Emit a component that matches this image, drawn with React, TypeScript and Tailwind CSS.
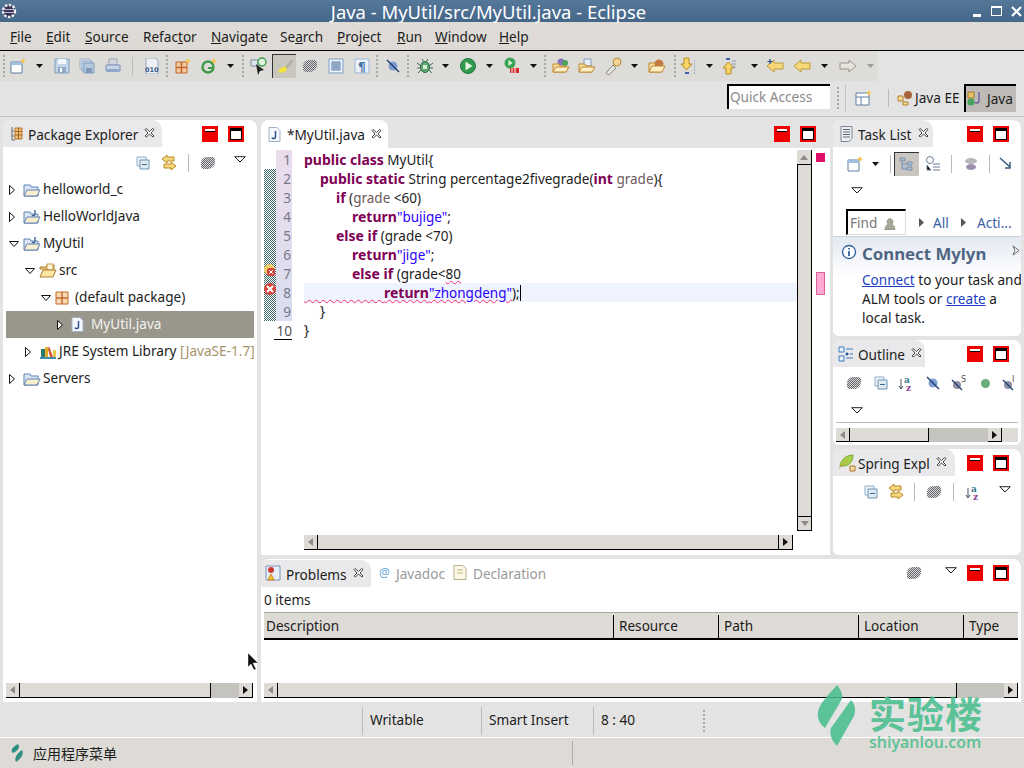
import React from 'react';

type Kids = { children?: React.ReactNode };

function Ico({ children, w = 16, h = 16 }: Kids & { w?: number; h?: number }) {
  return (
    <svg width={w} height={h} viewBox={`0 0 ${w} ${h}`} className="block shrink-0">
      {children}
    </svg>
  );
}

/* toolbar icons */
const NewFile = () => (
  <Ico w={18} h={16}>
    <path d="M2 4h11v11H2z" fill="#fff" stroke="#5f7f9f" />
    <path d="M2 4h11v3H2z" fill="#9fbfdf" />
    <path d="M14 0l1 2 2 1-2 1-1 2-1-2-2-1 2-1z" fill="#f5c64a" />
  </Ico>
);
const Floppy = () => (
  <Ico>
    <path d="M1 1h14v14H1z" fill="#c5d5e8" stroke="#7f9fc0" />
    <path d="M4 1h8v5H4z" fill="#f4f7fb" />
    <path d="M4 9h8v6H4z" fill="#8fa9c7" />
    <path d="M6 10h2v4H6z" fill="#fff" />
  </Ico>
);
const SaveAll = () => (
  <Ico>
    <path d="M1 1h10v10H1z" fill="#dde5ef" stroke="#a3b6cb" />
    <path d="M3 3h10v10H3z" fill="#c5d5e8" stroke="#8fa9c7" />
    <path d="M5 5h10v10H5z" fill="#b6cadf" stroke="#7f9fc0" />
    <path d="M7 10h6v5H7z" fill="#7f99b8" />
  </Ico>
);
const Printer = () => (
  <Ico>
    <path d="M4 1h8v6H4z" fill="#f6f7fa" stroke="#8b95a8" />
    <path d="M1 7h14v6H1z" fill="#c7d3e6" stroke="#7890b5" />
    <path d="M2 11h12v3H2z" fill="#8ea8cc" />
    <path d="M5 3h6M5 5h6" stroke="#aab2c2" />
  </Ico>
);
const Binary = () => (
  <Ico w={14} h={16}>
    <path d="M1 0h9l3 3v13H1z" fill="#eef1f6" stroke="#9caabd" />
    <text x="0" y="14" fontSize="6.5" fill="#345a8a" fontFamily="'DejaVu Sans',sans-serif" fontWeight="700">010</text>
  </Ico>
);
const PkgStar = () => (
  <Ico>
    <path d="M1 4h11v11H1z" fill="#f2c9a0" stroke="#c2642a" />
    <path d="M6.5 4v11M1 9.5h11" stroke="#c2642a" strokeWidth="1.5" />
    <path d="M13 0l1 2 2 1-2 1-1 2-1-2-2-1 2-1z" fill="#f5c64a" />
  </Ico>
);
const GCircle = () => (
  <Ico>
    <circle cx="7" cy="9" r="5.5" fill="none" stroke="#3f9a4a" strokeWidth="2.4" />
    <path d="M7 9h5v2H7z" fill="#3f9a4a" />
    <path d="M13 0l1 2 2 1-2 1-1 2-1-2-2-1 2-1z" fill="#f5c64a" />
  </Ico>
);
const RunG = () => (
  <Ico w={18} h={18}>
    <path d="M1 3h7v6H1z" fill="#dfe5ee" stroke="#7c8ba3" />
    <circle cx="12" cy="5" r="4" fill="#dff0df" stroke="#3f9a4a" strokeWidth="1.4" />
    <path d="M6 7l8 6-4 1-2 4z" fill="#222" />
  </Ico>
);
const Marker = () => (
  <Ico w={18} h={18}>
    <path d="M16 1L9 9l2 2 6-8z" fill="#b3ad9e" />
    <path d="M2 14c2-5 6-6 8-5l1 2c-1 3-5 5-9 3z" fill="#f2e23c" />
  </Ico>
);
const Dither = () => (
  <div className="w-[14px] h-[12px] rounded-tl-[6px] rounded-br-[7px] rounded-tr-[3px] rounded-bl-[3px] bg-[repeating-conic-gradient(#66666a_0_25%,#d8d8da_0_50%)] bg-[length:2px_2px]" />
);
const Blocks = () => (
  <Ico>
    <path d="M1 1h14v14H1z" fill="#eaf0f8" stroke="#7f9fc8" />
    <path d="M4 4h8v8H4z" fill="#c9d8ec" stroke="#5f7fa8" />
    <path d="M5 6h6M5 8h6M5 10h6" stroke="#50709a" />
  </Ico>
);
const Pilcrow = () => (
  <Ico>
    <path d="M1 1h14v14H1z" fill="#eaf0f8" stroke="#9fb7d6" />
    <text x="4" y="13" fontSize="12" fontWeight="700" fill="#3f6fa8" fontFamily="'DejaVu Sans',sans-serif">¶</text>
  </Ico>
);
const Slash = () => (
  <Ico>
    <circle cx="8" cy="8" r="4.5" fill="#7f9fd0" />
    <path d="M2 2l12 12" stroke="#1d3f70" strokeWidth="1.4" />
  </Ico>
);
const PinS = ({ c = '#8f8fa3', t }: { c?: string; t: string }) => (
  <Ico>
    <circle cx="6" cy="10" r="4" fill={c} />
    <path d="M1 5l10 10" stroke="#1d3f70" strokeWidth="1.2" />
    <text x="10" y="7" fontSize="8" fill="#555" fontFamily="'DejaVu Sans',sans-serif">{t}</text>
  </Ico>
);
const Bug = () => (
  <Ico w={18} h={18}>
    <ellipse cx="9" cy="10" rx="4.5" ry="5.5" fill="#5fa86f" stroke="#2c6a45" />
    <path d="M1 6l4 3M17 6l-4 3M1 11h4M17 11h-4M2 16l3-3M16 16l-3-3M6 2l2 3M12 2l-2 3" stroke="#3c6a55" />
    <path d="M7 8h4v4H7z" fill="#d8ecd8" />
  </Ico>
);
const Play = () => (
  <Ico w={18} h={18}>
    <circle cx="9" cy="9" r="7.5" fill="#2f9a4c" stroke="#1f7a3a" />
    <path d="M6.5 4.5l7 4.5-7 4.5z" fill="#e6f5e0" />
  </Ico>
);
const Cover = () => (
  <Ico w={18} h={18}>
    <circle cx="8" cy="6" r="5.5" fill="#3aa455" />
    <path d="M6.5 3l4 3-4 3z" fill="#e6f5e0" />
    <path d="M8 11h9v5H8z" fill="#d92c2c" />
    <path d="M10 11v5M13 11v5" stroke="#fff" />
  </Ico>
);
const OpenType = () => (
  <Ico w={18} h={16}>
    <circle cx="9" cy="4" r="3.5" fill="#8a74b8" />
    <circle cx="13" cy="5" r="3" fill="#4aa35a" />
    <path d="M1 6h6l1 2h6v6H1z" fill="#f6dd9c" stroke="#c08a32" />
    <path d="M1 14l3-5h13l-3 5z" fill="#fbeec6" stroke="#c08a32" />
  </Ico>
);
const OpenRes = () => (
  <Ico w={18} h={16}>
    <path d="M6 1h7v7H6z" fill="#e8eef6" stroke="#7f9fc0" />
    <path d="M1 6h6l1 2h6v6H1z" fill="#f6dd9c" stroke="#c08a32" />
    <path d="M1 14l3-5h13l-3 5z" fill="#fbeec6" stroke="#c08a32" />
  </Ico>
);
const Torch = () => (
  <Ico w={18} h={18}>
    <path d="M2 16l7-8 3 3-7 7z" fill="#e5e3dd" stroke="#8d8a80" />
    <circle cx="13" cy="5" r="4" fill="#f1d392" stroke="#b88a3a" />
  </Ico>
);
const FolderPie = () => (
  <Ico w={18} h={16}>
    <path d="M1 5h6l1 1h6v8H1z" fill="#f6dd9c" stroke="#c08a32" />
    <circle cx="11" cy="6" r="4.5" fill="#c27a45" />
    <path d="M1 14l3-6h13l-3 6z" fill="#fbeec6" stroke="#c08a32" />
  </Ico>
);
const DownAnno = () => (
  <Ico w={18} h={18}>
    <path d="M6 1h5v6h3l-5.500 6L3 7h3z" fill="#f5d46a" stroke="#b98a22" />
    <path d="M7 15h4v2H7z" fill="#3f5fb0" />
    <path d="M16.500 3v14" stroke="#9fb0d0" strokeDasharray="2 1" />
  </Ico>
);
const UpAnno = () => (
  <Ico w={18} h={18}>
    <path d="M6 17h5v-6h3L8.500 5 3 11h3z" fill="#f5d46a" stroke="#b98a22" />
    <path d="M6 1h4v2H6z" fill="#3f5fb0" />
    <path d="M12 4h4M12 7h4M12 10h4" stroke="#8d98b0" />
  </Ico>
);
const ArrowL = ({ star = false }: { star?: boolean }) => (
  <Ico w={18} h={14}>
    <path d="M1 7l7-6v3h9v6H8v3z" fill="#f7d878" stroke="#bf9a3a" />
    {star && <path d="M4 0v5M1.500 2.500h5" stroke="#1f4f8f" strokeWidth="1.2" />}
  </Ico>
);
const ArrowR = () => (
  <Ico w={18} h={14}>
    <path d="M17 7l-7-6v3H1v6h9v3z" fill="#e5e3dc" stroke="#99968a" />
  </Ico>
);
const Drop = ({ c = '#111' }: { c?: string }) => (
  <svg width="7" height="4" viewBox="0 0 7 4" className="block shrink-0">
    <path d="M0 0h7L3.500 4z" fill={c} />
  </svg>
);
const OutlineDrop = () => (
  <svg width="12" height="7" viewBox="0 0 12 7" className="block">
    <path d="M.7.7h10.600L6 6z" fill="#fff" stroke="#222" />
  </svg>
);
const Handle = () => <div className="w-0 h-[22px] border-l-2 border-dotted border-[#a9a7a2]" />;
const Sep = () => <div className="w-px h-[18px] bg-[#bdbbb6] shrink-0" />;

function Slot({ className, children }: Kids & { className: string }) {
  return <div className={`flex items-center justify-center shrink-0 ${className}`}>{children}</div>;
}

/* view icons */
const Collapse = () => (
  <Ico w={14} h={14}>
    <path d="M1 1h9v9H1z" fill="#eef3f8" stroke="#8fb0c8" />
    <path d="M4 4h9v9H4z" fill="#dfe9f2" stroke="#6d94b0" />
    <path d="M6 8.500h5" stroke="#3a6a90" />
  </Ico>
);
const LinkArrows = () => (
  <Ico>
    <path d="M1 4l5-4v2h7v4H6v2z" fill="#f6d780" stroke="#b98a22" />
    <path d="M15 11l-5-4v2H3v4h7v2z" fill="#f6d780" stroke="#b98a22" />
  </Ico>
);
const SortAz = () => (
  <Ico w={17} h={17}>
    <path d="M3 4v10M1 11l2 3 2-3" fill="none" stroke="#456" />
    <text x="6" y="8" fontSize="9" fontWeight="700" fill="#2f7a8a" fontFamily="'DejaVu Serif',serif">a</text>
    <text x="8" y="16" fontSize="9" fontWeight="700" fill="#8a3f9a" fontFamily="'DejaVu Serif',serif">z</text>
  </Ico>
);
const Tri = ({ open = false }: { open?: boolean }) =>
  open ? (
    <svg width="10" height="6" viewBox="0 0 10 6" className="block">
      <path d="M.5.5h9L5 5.500z" fill="#fff" stroke="#111" />
    </svg>
  ) : (
    <svg width="6" height="10" viewBox="0 0 6 10" className="block">
      <path d="M.5.500v9L5.500 5z" fill="#fff" stroke="#111" />
    </svg>
  );
const SolidTri = () => (
  <svg width="5" height="9" viewBox="0 0 5 9" className="block">
    <path d="M0 0v9l5-4.500z" fill="#555" />
  </svg>
);
const ProjFolder = ({ j = false }: { j?: boolean }) => (
  <Ico w={18} h={16}>
    <path d="M1 3h6l1 2h7v9H1z" fill="#dce6f5" stroke="#5f80b5" />
    <path d="M1 14l3-6h13l-3 6z" fill="#f9efce" stroke="#5f80b5" />
    {j && <path d="M12 1v4c0 2-2 2-3 1" fill="none" stroke="#3c5c98" strokeWidth="1.3" />}
  </Ico>
);
const SrcFolder = () => (
  <Ico w={18} h={16}>
    <path d="M1 4h6l1-2h7v4H1z" fill="#f6dd9c" stroke="#b07c2a" />
    <path d="M8 1h6v6H8z" fill="#fff6df" stroke="#c7963c" />
    <path d="M1 14l3-7h13l-3 7z" fill="#fbe6a6" stroke="#b07c2a" />
  </Ico>
);
const PkgIcon = () => (
  <Ico w={14} h={14}>
    <path d="M1 1h12v12H1z" fill="#f7d8b4" stroke="#c26a2c" />
    <path d="M7 1v12M1 7h12" stroke="#c26a2c" strokeWidth="1.4" />
  </Ico>
);
const JavaFile = () => (
  <Ico w={13} h={15}>
    <path d="M1 .5h8l3 3v11H1z" fill="#f5f8fc" stroke="#9fb2c8" />
    <path d="M7.500 4v6c0 2-3 2-3.500 .5" fill="none" stroke="#2c4f92" strokeWidth="1.5" />
  </Ico>
);
const Books = () => (
  <Ico w={18} h={16}>
    <path d="M1 13h16v2H1z" fill="#3f8fb0" />
    <path d="M2 5h4v8H2z" fill="#2e7a6a" />
    <path d="M6 3h3v10H6z" fill="#e8a92c" />
    <path d="M10 2l4 11h-3L9 5z" fill="#d6532a" />
    <path d="M14 6h3v7h-3z" fill="#e6c84a" />
  </Ico>
);
const PkgExplorer = () => (
  <Ico w={12} h={14}>
    <path d="M1 0v13h3M1 4h2M1 9h2" fill="none" stroke="#666" />
    <path d="M4 1h7v11H4z" fill="#e9bf79" stroke="#b5762a" />
    <path d="M4 4.500h7M4 8h7M7.500 1v11" stroke="#a8641e" />
  </Ico>
);
const TaskIcon = () => (
  <Ico w={13} h={16}>
    <path d="M1 .5h11v12l-3 3H1z" fill="#eef0f3" stroke="#7d8693" />
    <path d="M3 3.500h7M3 6h7M3 8.500h7M3 11h7" stroke="#5f6a78" />
  </Ico>
);
const OutlineIcon = () => (
  <Ico>
    <path d="M1 1h5v5H1zM1 10h5v5H1z" fill="#e9f1fa" stroke="#3c7ac0" />
    <path d="M8 3h7M8 7h2v2H8zM12 8h3M8 12h7" stroke="#3c7ac0" />
  </Ico>
);
const SpringLeaf = () => (
  <Ico w={18} h={18}>
    <path d="M2 12C3 5 9 1 15 1c0 7-4 11-10 11z" fill="#a4d04a" stroke="#7fa52c" />
    <path d="M1 14l9-8" stroke="#c7a23a" />
    <path d="M12 12h5v5h-5z" fill="#f3dba9" stroke="#b5762a" />
  </Ico>
);
const ProblemsIcon = () => (
  <Ico>
    <path d="M1 1h14v14H1z" fill="#e7edf6" stroke="#7e92b5" />
    <circle cx="6" cy="5" r="3" fill="#cc3b32" />
    <path d="M3 15l3-6 3 6z" fill="#f2c23c" stroke="#c98a1c" />
  </Ico>
);
const CloseX = () => (
  <svg width="11" height="11" viewBox="0 0 11 11" className="block shrink-0">
    <path
      d="M1 1.500l1-1 3.500 3 3-3 1.500 1-3 3.500 3 3-1 1-3.500-3-3 3-1.500-1 3-3z"
      fill="#fff"
      stroke="#333"
      strokeWidth=".9"
    />
  </svg>
);

function MinBtn() {
  return (
    <div className="w-4 h-4 bg-[#ee0000] flex justify-center pt-[3px] shrink-0">
      <div className="w-[10px] h-[3px] bg-white border-b border-black" />
    </div>
  );
}
function MaxBtn() {
  return (
    <div className="w-4 h-4 bg-[#ee0000] flex items-center justify-center shrink-0">
      <div className="w-[12px] h-[12px] bg-white border border-black border-t-[3px]" />
    </div>
  );
}
function MinMax() {
  return (
    <div className="flex gap-[10px]">
      <MinBtn />
      <MaxBtn />
    </div>
  );
}

function ViewTab({ className, icon, label }: { className: string; icon: React.ReactNode; label: string }) {
  return (
    <div className={`h-[27px] flex items-center rounded-tr-[10px] rounded-tl-[6px] bg-[#e9e9eb] shrink-0 ${className}`}>
      {icon}
      <span className="whitespace-nowrap flex-1 pt-[4px]">{label}</span>
      <CloseX />
    </div>
  );
}

function ScrollBtn({ left }: { left?: boolean }) {
  return (
    <div className="w-[14px] h-full bg-[#dedbd6] border-r border-b border-black flex items-center justify-center shrink-0">
      <svg width="5" height="8" viewBox="0 0 5 8">
        {left ? <path d="M5 0v8L0 4z" fill="#8d8b86" /> : <path d="M0 0v8l5-4z" fill="#111" />}
      </svg>
    </div>
  );
}

function HBar({ className, track, rest }: { className: string; track: string; rest?: string }) {
  return (
    <div className={`h-[15px] flex ${className}`}>
      <ScrollBtn left />
      <div className={`h-full bg-[#dedbd6] border-r border-b border-black ${track}`} />
      {rest && <div className={`h-full bg-[#c5c3be] ${rest}`} />}
      <ScrollBtn />
    </div>
  );
}

const Kw = ({ children }: Kids) => <span className="font-bold text-[14px] text-[#7f0055]">{children}</span>;
const Str = ({ children }: Kids) => <span className="text-[#2a00ff]">{children}</span>;
const Fld = ({ children }: Kids) => <span className="text-[#6a5a5a]">{children}</span>;

const wave = 'underline decoration-wavy decoration-[#ff2a7a] decoration-1';

const codeLines: React.ReactNode[] = [
  <><Kw>public class</Kw> MyUtil{'{'}</>,
  <>{'\t'}<Kw>public static</Kw> String percentage2fivegrade(<Kw>int</Kw> <Fld>grade</Fld>){'{'}</>,
  <>{'\t\t'}<Kw>if</Kw> (<Fld>grade</Fld> {'<'}60)</>,
  <>{'\t\t\t'}<Kw>return</Kw><Str>"bujige"</Str>;</>,
  <>{'\t\t'}<Kw>else if</Kw> (grade {'<'}70)</>,
  <>{'\t\t\t'}<Kw>return</Kw><Str>"jige"</Str>;</>,
  <>{'\t\t\t'}<Kw>else if</Kw> (grade{'<'}<span className={wave}>80</span></>,
  <span className={wave}>
    <span className="tracking-[1.49px]">{'\u00a0'.repeat(16)}</span>
    <Kw>return</Kw><Str>"zhongdeng"</Str>
  </span>,
  <>{'\t'}{'}'}</>,
  <>{'}'}</>,
];

function TreeRow({ pad, tri, icon, children, sel }: { pad: string; tri?: 'open' | 'closed'; icon: React.ReactNode; children: React.ReactNode; sel?: boolean }) {
  return (
    <div className={`h-[27px] flex items-center ${pad} ${sel ? 'bg-[#99968c] text-[#f2f2ee]' : ''}`}>
      <div className="w-[14px] flex justify-start shrink-0">
        {tri === 'open' ? <Tri open /> : <Tri />}
      </div>
      <div className="w-[20px] flex shrink-0">{icon}</div>
      <span className="whitespace-nowrap">{children}</span>
    </div>
  );
}

export default function App() {
  return (
    <div className="relative w-[1024px] h-[768px] overflow-hidden flex flex-col bg-[#e4e3e3] text-[13.6px] text-[#1c1c1c] font-['Noto_Sans','Noto_Sans_CJK_SC',sans-serif]">
      {/* Title bar */}
      <div className="h-[22px] shrink-0 flex items-center relative bg-gradient-to-b from-[#55779a] to-[#446688]">
        <svg width="18" height="18" viewBox="0 0 18 18" className="shrink-0">
          <circle cx="9" cy="9" r="6" fill="#3a3558" stroke="#eee" strokeWidth="2.400" strokeDasharray="2.500 1.400" />
          <path d="M4 7.500h10M4 10.500h10" stroke="#b9b5cc" />
        </svg>
        <div className="flex-1 text-center text-white text-[18.45px] leading-[22px] pt-[1px] pr-[14px] whitespace-nowrap">Java - MyUtil/src/MyUtil.java - Eclipse</div>
        <div className="flex items-center gap-[7px] pr-[2px] text-white">
          <div className="w-[8px] h-[3px] bg-white mt-[8px]" />
          <div className="w-[11px] h-[10px] border border-white border-t-2 ml-[3px]" />
          <svg width="11" height="11" viewBox="0 0 11 11" className="ml-[2px]"><path d="M1 1l9 9M10 1l-9 9" stroke="#fff" strokeWidth="2.200" /></svg>
        </div>
      </div>

      {/* Menu */}
      <div className="h-[29px] shrink-0 flex items-center bg-[#dedbd6] border-b-[1.5px] border-black pl-[10px] pt-[3px]">
        <span className="w-[36px]"><u>F</u>ile</span>
        <span className="w-[39px]"><u>E</u>dit</span>
        <span className="w-[58px]"><u>S</u>ource</span>
        <span className="w-[68px]">Refac<u>t</u>or</span>
        <span className="w-[69px]"><u>N</u>avigate</span>
        <span className="w-[57px]">Se<u>a</u>rch</span>
        <span className="w-[60px]"><u>P</u>roject</span>
        <span className="w-[38px]"><u>R</u>un</span>
        <span className="w-[64px]"><u>W</u>indow</span>
        <span><u>H</u>elp</span>
      </div>

      {/* Main toolbar */}
      <div className="h-[30px] shrink-0 flex items-center">
        <div className="flex items-center w-[878px] h-full bg-[#dedcd8]">
          <Slot className="w-[8px]"><Handle /></Slot>
          <Slot className="w-[20px]"><NewFile /></Slot>
          <Slot className="w-[22px]"><Drop /></Slot>
          <Slot className="w-[24px]"><Floppy /></Slot>
          <Slot className="w-[26px]"><SaveAll /></Slot>
          <Slot className="w-[26px]"><Printer /></Slot>
          <Slot className="w-[12px]"><Sep /></Slot>
          <Slot className="w-[28px]"><Binary /></Slot>
          <Slot className="w-[2px]"><Handle /></Slot>
          <Slot className="w-[30px]"><PkgStar /></Slot>
          <Slot className="w-[22px]"><GCircle /></Slot>
          <Slot className="w-[20px]"><Drop /></Slot>
          <Slot className="w-[6px]"><Handle /></Slot>
          <Slot className="w-[26px]"><RunG /></Slot>
          <Slot className="w-[24px] h-[24px] bg-[#c9c6c0] border-l border-t border-[#333] border-r-white border-b-white"><Marker /></Slot>
          <Slot className="w-[28px]"><Dither /></Slot>
          <Slot className="w-[24px]"><Blocks /></Slot>
          <Slot className="w-[28px]"><Pilcrow /></Slot>
          <Slot className="w-[2px]"><Handle /></Slot>
          <Slot className="w-[29px]"><Slash /></Slot>
          <Slot className="w-[2px]"><Handle /></Slot>
          <Slot className="w-[32px]"><Bug /></Slot>
          <Slot className="w-[8px]"><Drop /></Slot>
          <Slot className="w-[38px]"><Play /></Slot>
          <Slot className="w-[4px]"><Drop /></Slot>
          <Slot className="w-[40px]"><Cover /></Slot>
          <Slot className="w-[4px]"><Drop /></Slot>
          <Slot className="w-[9px]" />
          <Slot className="w-[2px]"><Handle /></Slot>
          <Slot className="w-[30px]"><OpenType /></Slot>
          <Slot className="w-[22px]"><OpenRes /></Slot>
          <Slot className="w-[30px]"><Torch /></Slot>
          <Slot className="w-[12px]"><Drop /></Slot>
          <Slot className="w-[34px]"><FolderPie /></Slot>
          <Slot className="w-[2px]"><Handle /></Slot>
          <Slot className="w-[22px]"><DownAnno /></Slot>
          <Slot className="w-[23px]"><Drop /></Slot>
          <Slot className="w-[16px]"><UpAnno /></Slot>
          <Slot className="w-[34px]"><Drop /></Slot>
          <Slot className="w-[8px]"><ArrowL star /></Slot>
          <Slot className="w-[45px]"><ArrowL /></Slot>
          <Slot className="w-[1px]"><Drop /></Slot>
          <Slot className="w-[45px]"><ArrowR /></Slot>
          <Slot className="w-[1px]"><Drop c="#999" /></Slot>
        </div>
      </div>

      {/* Quick access and perspectives */}
      <div className="h-[36px] shrink-0 flex items-start justify-end border-b border-[#c4c3c2] pt-[3px] pr-[3px]">
        <div className="w-[103px] h-[25px] bg-white border-l-2 border-t-2 border-black flex items-center pl-[1px] text-[#8a8a8a] whitespace-nowrap">Quick Access</div>
        <Slot className="w-[15px] h-[28px]"><Handle /></Slot>
        <div className="w-[176px] h-[28px] flex items-center border-l border-[#c4c3c2]">
          <Slot className="w-[33px]">
            <Ico>
              <path d="M1 3h13v12H1z" fill="#fff" stroke="#5f7f9f" />
              <path d="M1 7h13M6 7v8" stroke="#5f7f9f" />
              <path d="M14 0l1 2 2 1-2 1-1 2-1-2-2-1 2-1z" fill="#f5c64a" />
            </Ico>
          </Slot>
          <Slot className="w-[18px]"><Sep /></Slot>
          <Ico>
            <path d="M1 6h5v5H1zM6 12h5v3H6z" fill="#f6dd9c" stroke="#b07c2a" />
            <circle cx="11" cy="5" r="4" fill="#a8663a" />
          </Ico>
          <span className="ml-[2px] w-[49px] whitespace-nowrap">Java EE</span>
          <div className="w-[52px] h-[28px] flex items-center bg-[#bebbb6] border-l-2 border-t-2 border-black">
            <Ico>
              <path d="M2 1h6v6H2z" fill="#e8c368" stroke="#a8762a" />
              <circle cx="5" cy="11" r="3.500" fill="#4aa35a" />
              <path d="M13 1v9c0 2-3 3-4 1" fill="none" stroke="#7060a8" strokeWidth="1.500" />
            </Ico>
            <span className="ml-[5px]">Java</span>
          </div>
        </div>
      </div>

      {/* Workbench */}
      <div className="flex-1 min-h-0 flex pt-[3px] pl-[3px] pr-[3px] gap-[4px]">
        {/* Package explorer */}
        <div className="w-[254px] bg-white rounded-t-[8px] flex flex-col shrink-0">
          <div className="h-[27px] flex items-center justify-between shrink-0">
            <ViewTab className="w-[159px] pl-[8px] pr-[7px] gap-[5px]" icon={<PkgExplorer />} label="Package Explorer" />
            <div className="flex-1 flex justify-end pr-[13px]"><MinMax /></div>
          </div>
          <div className="h-[15px] flex items-center pl-[133px] mt-[8px] shrink-0">
            <Slot className="w-[14px]"><Collapse /></Slot>
            <Slot className="w-[38px]"><LinkArrows /></Slot>
            <Slot className="w-[1px]"><Sep /></Slot>
            <Slot className="w-[38px]"><Dither /></Slot>
            <Slot className="w-[26px] pb-[6px]"><OutlineDrop /></Slot>
          </div>
          <div className="pt-[6px] pl-[3px] pr-[3px] flex-1 min-h-0">
            <TreeRow pad="pl-[3px]" icon={<ProjFolder />}>helloworld_c</TreeRow>
            <TreeRow pad="pl-[3px]" icon={<ProjFolder j />}>HelloWorldJava</TreeRow>
            <TreeRow pad="pl-[3px]" tri="open" icon={<ProjFolder j />}>MyUtil</TreeRow>
            <TreeRow pad="pl-[19px]" tri="open" icon={<SrcFolder />}>src</TreeRow>
            <TreeRow pad="pl-[35px]" tri="open" icon={<PkgIcon />}>(default package)</TreeRow>
            <TreeRow pad="pl-[51px]" icon={<JavaFile />} sel>MyUtil.java</TreeRow>
            <TreeRow pad="pl-[19px]" icon={<Books />}>
              JRE System Library <span className="text-[#a8946a]">[JavaSE-1.7]</span>
            </TreeRow>
            <TreeRow pad="pl-[3px]" icon={<ProjFolder />}>Servers</TreeRow>
          </div>
          <HBar className="mx-[3px] mb-[4px] shrink-0" track="w-[191px]" rest="w-[28px]" />
        </div>

        {/* Centre and right */}
        <div className="flex-1 min-w-0 flex flex-col gap-[4px]">
          <div className="flex gap-[3px] h-[435px] shrink-0">
            {/* Editor */}
            <div className="w-[569px] bg-white rounded-t-[8px] flex flex-col shrink-0">
              <div className="h-[28px] flex items-center bg-[#e4e3e3] rounded-t-[8px] shrink-0">
                <div className="w-[127px] h-[28px] bg-white rounded-t-[8px] flex items-center pl-[7px] gap-[6px] shrink-0">
                  <JavaFile />
                  <span className="pt-[2px]">*MyUtil.java</span>
                  <CloseX />
                </div>
                <div className="flex-1 flex justify-end pr-[14px]"><MinMax /></div>
              </div>
              <div className="flex-1 min-h-0 flex">
                <div className="w-[3px] shrink-0" />
                {/* annotation ruler */}
                <div className="w-[12px] shrink-0 flex flex-col pt-[21px]">
                  <div className="h-[152px] relative bg-[repeating-conic-gradient(#3f6668_0_25%,#ffffff_0_50%)] bg-[length:2px_2px]">
                    <div className="absolute left-0 top-[95px] w-[11px] h-[11px] rounded-full bg-[#f2d06a]">
                      <div className="w-[8px] h-[8px] ml-[3px] mt-[4px] bg-[#d8443c] rounded-[2px] flex items-center justify-center">
                        <svg width="6" height="6" viewBox="0 0 6 6" className="block"><path d="M1 1l4 4M5 1L1 5" stroke="#fff" /></svg>
                      </div>
                    </div>
                    <div className="absolute left-0 top-[114px] w-[12px] h-[12px] rounded-full bg-[#d8443c] flex items-center justify-center">
                      <svg width="8" height="8" viewBox="0 0 8 8"><path d="M1 1l6 6M7 1l-6 6" stroke="#fff" strokeWidth="2" /></svg>
                    </div>
                  </div>
                </div>
                {/* line numbers */}
                <div className="w-[16px] shrink-0 pt-[2px] text-[#77788a] text-right pr-[1px] leading-[19px]">
                  <div className="bg-gradient-to-b from-[#ecdcec] to-[#d8deef] -mr-[1px] pr-[1px]">
                    {[1, 2, 3, 4, 5, 6, 7, 8, 9].map(n => (
                      <div key={n} className="h-[19px]">{n}</div>
                    ))}
                  </div>
                  <div className="h-[19px] -ml-[2px] text-[#555] border-b border-black -mr-[1px]">10</div>
                </div>
                {/* code */}
                <div className="flex-1 min-w-0 flex flex-col pl-[12px]">
                  <div className="flex-1 min-h-0 relative pt-[2px] text-[13.5px] leading-[19px] [tab-size:16px] whitespace-pre">
                    {codeLines.map((l, i) => (
                      <div key={i} className={`h-[19px] ${i === 7 ? 'bg-[#eef3fd]' : ''}`}>
                        {l}
                        {i === 7 && <>);<span className="inline-block w-[1.500px] h-[16px] bg-black align-[-3px]" /></>}
                      </div>
                    ))}
                  </div>
                  <div className="h-[15px] mt-[1px] mb-[5px] flex">
                    <ScrollBtn left />
                    <div className="w-[461px] h-full bg-[#dedbd6] border-r border-b border-black" />
                    <ScrollBtn />
                  </div>
                </div>
                {/* vertical scroll + overview */}
                <div className="w-[15px] shrink-0 flex flex-col pt-[2px] pb-[24px]">
                  <div className="h-[15px] bg-[#dedbd6] border-r border-b border-black flex items-center justify-center">
                    <svg width="8" height="5" viewBox="0 0 8 5"><path d="M0 5h8L4 0z" fill="#8d8b86" /></svg>
                  </div>
                  <div className="flex-1 bg-[#dedbd6] border-l border-r border-black" />
                  <div className="h-[15px] bg-[#dedbd6] border border-black flex items-center justify-center">
                    <svg width="8" height="5" viewBox="0 0 8 5"><path d="M0 0h8L4 5z" fill="#8d8b86" /></svg>
                  </div>
                </div>
                <div className="w-[18px] shrink-0 pl-[4px] pt-[5px]">
                  <div className="w-[9px] h-[9px] bg-[#e0106a]" />
                  <div className="w-[9px] h-[23px] mt-[110px] bg-[#ffa8d4] border border-[#e0609a]" />
                </div>
              </div>
            </div>

            {/* Right views */}
            <div className="flex-1 min-w-0 flex flex-col gap-[4px]">
              <div className="h-[216px] bg-white rounded-t-[8px] rounded-b-[6px] flex flex-col shrink-0 overflow-hidden">
                <div className="h-[27px] flex items-center shrink-0">
                  <ViewTab className="w-[100px] pl-[7px] pr-[4px] gap-[5px]" icon={<TaskIcon />} label="Task List" />
                  <div className="flex-1 flex justify-end pr-[12px]"><MinMax /></div>
                </div>
                <div className="h-[28px] flex items-center shrink-0 pl-[13px] overflow-hidden mt-[3px]">
                  <Slot className="w-[18px]"><NewFile /></Slot>
                  <Slot className="w-[22px]"><Drop /></Slot>
                  <Slot className="w-[8px]"><Sep /></Slot>
                  <Slot className="w-[25px] h-[24px] bg-[#c9c6c0] border-l border-t border-[#333]">
                    <Ico><path d="M1 1h5v3H1zM8 5h5v3H8zM8 10h5v3H8zM3 4v8h5M3 7h5" fill="#a8c0d6" stroke="#7a90a8" /></Ico>
                  </Slot>
                  <Slot className="w-[28px]">
                    <Ico><circle cx="5" cy="4" r="3.500" fill="#fff" stroke="#6a8098" /><path d="M8 8h7M8 11h7M8 14h7M2 9v5h4" stroke="#6a8098" /></Ico>
                  </Slot>
                  <Slot className="w-[8px]"><Sep /></Slot>
                  <Slot className="w-[32px]"><Ico><ellipse cx="8" cy="5" rx="6" ry="3" fill="#b8b8bc" /><ellipse cx="8" cy="11" rx="5" ry="3" fill="#9a8fb0" /></Ico></Slot>
                  <Slot className="w-[4px]"><Sep /></Slot>
                  <Slot className="w-[30px]"><Ico><path d="M2 2l10 9M12 6v6H7" fill="none" stroke="#3a5a80" strokeWidth="1.500" /></Ico></Slot>
                </div>
                <div className="h-[10px] pl-[18px] pt-[9px] shrink-0"><OutlineDrop /></div>
                <div className="h-[26px] mt-[21px] flex items-center shrink-0 pl-[13px]">
                  <div className="w-[60px] h-[26px] border-l-2 border-t-2 border-black border-r border-b border-r-[#ddd] border-b-[#ddd] flex items-center pl-[2px] text-[#777] gap-[6px] pt-[1px]">
                    Find
                    <Ico w={14} h={14}><path d="M2 14c0-4 2-5 3-6a3 3 0 1 1 4 0c1 1 3 2 3 6z" fill="#a8a89a" stroke="#77775f" strokeDasharray="1 1" /></Ico>
                  </div>
                  <div className="ml-[13px] w-[14px]"><SolidTri /></div>
                  <span className="text-[#3a5da8] w-[28px] pt-[2px]">All</span>
                  <div className="w-[16px]"><SolidTri /></div>
                  <span className="text-[#3a5da8] pt-[2px]">Acti...</span>
                </div>
                <div className="flex-1 mt-[1px] border-t border-[#cfd0d2] bg-gradient-to-b from-[#e3e9f2] to-white to-40% pl-[8px] min-h-0">
                  <div className="flex items-center h-[30px]">
                    <Ico w={16} h={16}><circle cx="8" cy="8" r="6.500" fill="#fff" stroke="#2c5f9c" strokeWidth="1.300" /><path d="M8 4v1.500M8 7v5" stroke="#2c5f9c" strokeWidth="1.800" /></Ico>
                    <span className="ml-[5px] text-[16.8px] font-bold text-[#4f6582] flex-1 whitespace-nowrap pt-[3px]">Connect Mylyn</span>
                    <svg width="8" height="11" viewBox="0 0 8 11" className="mr-[1px] mb-[4px]"><path d="M1 1l6 4.500-6 4.500 2-4.500z" fill="#fff" stroke="#666" /></svg>
                  </div>
                  <div className="pl-[21px] pt-[3px] leading-[19px] whitespace-nowrap">
                    <div><span className="text-[#1d3fc4] underline">Connect</span> to your task and</div>
                    <div>ALM tools or <span className="text-[#1d3fc4] underline">create</span> a</div>
                    <div>local task.</div>
                  </div>
                </div>
              </div>

              <div className="h-[105px] bg-white rounded-t-[8px] rounded-b-[6px] flex flex-col shrink-0 overflow-hidden">
                <div className="h-[27px] flex items-center shrink-0">
                  <ViewTab className="w-[92px] pl-[5px] pr-[3px] gap-[4px]" icon={<OutlineIcon />} label="Outline" />
                  <div className="flex-1 flex justify-end pr-[12px]"><MinMax /></div>
                </div>
                <div className="h-[20px] mt-[6px] flex items-center pl-[14px] shrink-0 overflow-hidden">
                  <Slot className="w-[14px]"><Dither /></Slot>
                  <Slot className="w-[40px]"><Collapse /></Slot>
                  <Slot className="w-[10px]"><SortAz /></Slot>
                  <Slot className="w-[44px]"><Slash /></Slot>
                  <Slot className="w-[8px]"><PinS t="S" /></Slot>
                  <Slot className="w-[44px]"><div className="w-[9px] h-[9px] rounded-full bg-[#6aad7a]" /></Slot>
                  <Slot className="w-[6px]"><PinS t="I" /></Slot>
                </div>
                <div className="pl-[18px] pt-[14px] h-[29px] shrink-0"><OutlineDrop /></div>
                <div className="flex-1 min-h-0 mx-[3px] border-t border-[#bbb] pt-[5px]">
                  <div className="h-[14px] flex">
                    <ScrollBtn left />
                    <div className="w-[79px] h-full bg-[#dedbd6] border-r border-b border-black" />
                    <div className="w-[59px] h-full bg-[#c5c3be]" />
                    <ScrollBtn />
                    <div className="flex-1 bg-[#dedbd6]" />
                  </div>
                </div>
              </div>

              <div className="flex-1 min-h-0 bg-white rounded-t-[8px] rounded-b-[6px] flex flex-col">
                <div className="h-[27px] flex items-center shrink-0">
                  <ViewTab className="w-[122px] pl-[5px] pr-[8px] gap-[2px]" icon={<SpringLeaf />} label="Spring Expl" />
                  <div className="flex-1 flex justify-end pr-[12px]"><MinMax /></div>
                </div>
                <div className="h-[20px] mt-[6px] flex items-center pl-[31px] shrink-0">
                  <Slot className="w-[14px]"><Collapse /></Slot>
                  <Slot className="w-[36px]"><LinkArrows /></Slot>
                  <Slot className="w-[1px]"><Sep /></Slot>
                  <Slot className="w-[38px]"><Dither /></Slot>
                  <Slot className="w-[1px]"><Sep /></Slot>
                  <Slot className="w-[38px]"><SortAz /></Slot>
                  <Slot className="w-[26px] pb-[6px]"><OutlineDrop /></Slot>
                </div>
              </div>
            </div>
          </div>

          {/* Problems */}
          <div className="flex-1 min-h-0 bg-white rounded-t-[8px] flex flex-col">
            <div className="h-[27px] flex items-center shrink-0 pt-[1px]">
              <ViewTab className="w-[110px] pl-[4px] pr-[7px] gap-[5px]" icon={<ProblemsIcon />} label="Problems" />
              <div className="flex items-center text-[#9a9a9a] ml-[8px] gap-[5px]">
                <span className="text-[#6aa6d8] text-[12px] w-[12px]">@</span>
                <span className="pt-[3px]">Javadoc</span>
                <div className="w-[15px] ml-[3px]">
                  <Ico w={14} h={15}><path d="M1 .5h9l3 3v11H1z" fill="#fbf7e6" stroke="#b8b08a" /><path d="M4 5h6M4 8h6" stroke="#c2b478" /></Ico>
                </div>
                <span className="pt-[3px]">Declaration</span>
              </div>
              <div className="flex-1 flex items-center justify-end pr-[12px]">
                <div className="mr-[24px]"><Dither /></div>
                <div className="mr-[10px] pb-[6px]"><OutlineDrop /></div>
                <MinMax />
              </div>
            </div>
            <div className="h-[26px] pl-[3px] pt-[2px] flex items-center shrink-0">0 items</div>
            <div className="h-[28px] mx-[3px] pt-[2px] flex bg-[#dedbd6] border-t border-[#aaa] border-b-2 border-b-black shrink-0">
              <div className="w-[350px] pl-[2px] flex items-center border-r border-black">Description</div>
              <div className="w-[105px] pl-[5px] flex items-center border-r border-black">Resource</div>
              <div className="w-[140px] pl-[5px] flex items-center border-r border-black">Path</div>
              <div className="w-[105px] pl-[5px] flex items-center border-r border-black">Location</div>
              <div className="flex-1 pl-[5px] flex items-center">Type</div>
            </div>
            <div className="flex-1 min-h-0" />
            <HBar className="mx-[3px] mb-[4px] shrink-0" track="w-[679px]" rest="w-[47px]" />
          </div>
        </div>
      </div>

      {/* Status bar */}
      <div className="h-[34px] mt-[2px] shrink-0 flex items-center border-b border-white">
        <div className="w-[362px]" />
        <div className="w-[119px] h-[28px] pl-[7px] pb-[1px] flex items-center border-l border-[#bbb]">Writable</div>
        <div className="w-[112px] h-[28px] pl-[7px] pb-[1px] flex items-center border-l border-[#bbb]">Smart Insert</div>
        <div className="w-[110px] h-[28px] pl-[7px] pb-[1px] flex items-center border-l border-[#bbb]">8 : 40</div>
        <div className="h-[22px] border-l-2 border-dotted border-[#aaa]" />
      </div>

      {/* Panel */}
      <div className="h-[30px] shrink-0 flex items-center bg-[#dedbd6]">
        <svg width="14" height="18" viewBox="0 0 14 18" className="ml-[10px] mr-[9px]">
          <path d="M8 0c2 3 1 6-5 9C0 7 2 3 8 0z" fill="#2f8f82" />
          <path d="M12 6c2 3 0 8-6 12-2-3 0-8 6-12z" fill="#2f8f82" />
        </svg>
        <span className="w-[539px] text-[14px] font-['Noto_Sans_CJK_SC','Noto_Sans',sans-serif]">应用程序菜单</span>
        <div className="w-px h-[24px] bg-[#aaa]" />
      </div>

      {/* Mouse pointer */}
      <svg width="12" height="18" viewBox="0 0 12 18" className="absolute left-[247px] top-[653px]">
        <path d="M1 0v14l3-3 3 6 2-1-3-6h5z" fill="#111" stroke="#fff" strokeWidth=".4" />
      </svg>

      {/* Watermark */}
      <div className="absolute left-[817px] top-[684px] flex items-start opacity-85 pointer-events-none">
        <svg width="40" height="64" viewBox="0 0 40 64" className="block">
          <path d="M20 1C24 6 26 11 25 15L8 44C3 40 0 35 1 28 2 20 12 10 20 1z" fill="#45bd8c" />
          <path d="M34 16C38 20 39 26 37 32L20 62C15 57 12 51 14 44z" fill="#45bd8c" />
        </svg>
        <div className="ml-[12px] mt-[10px] text-[#45bd8c] w-[114px]">
          <div className="text-[37px] leading-[38px] h-[38px] font-bold tracking-[1px] whitespace-nowrap font-['Noto_Sans_CJK_SC',sans-serif]">实验楼</div>
          <div className="text-[16px] leading-[18px] mt-[1px] font-['Open_Sans',sans-serif] font-semibold whitespace-nowrap">shiyanlou.com</div>
        </div>
      </div>
    </div>
  );
}
